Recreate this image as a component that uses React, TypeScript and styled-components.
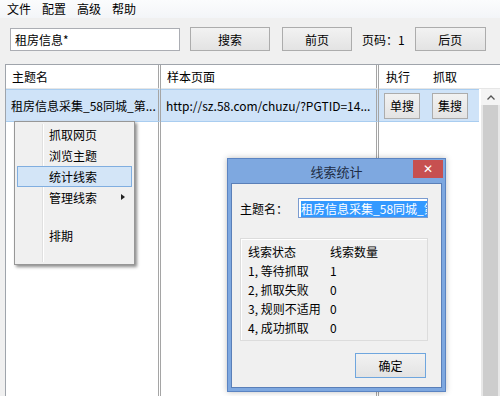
import React from "react";
import styled, { createGlobalStyle } from "styled-components";

const GlobalStyle = createGlobalStyle`
  html, body {
    margin: 0;
    padding: 0;
    background: #f0f0f0;
  }
  * {
    box-sizing: border-box;
  }
`;

const font = `"Noto Sans CJK SC", "Liberation Sans", sans-serif`;

const Window = styled.div`
  position: relative;
  width: 500px;
  height: 396px;
  overflow: hidden;
  background: #f0f0f0;
  font-family: ${font};
  font-size: 12px;
  color: #000;
  display: flex;
  flex-direction: column;
`;

const MenuBar = styled.div`
  height: 18px;
  display: flex;
  align-items: center;
  padding-left: 2px;
  background: linear-gradient(#fbfcfd, #f3f5f8);
`;

const MenuItem = styled.span`
  padding: 0 6px 0 5px;
  line-height: 18px;
`;

const Toolbar = styled.div`
  height: 46px;
  display: flex;
  align-items: center;
  padding: 0 10px 4px 10px;
`;

const SearchInput = styled.div`
  width: 170px;
  height: 23px;
  border: 1px solid #abadb3;
  background: #fff;
  padding-left: 4px;
  line-height: 21px;
`;

const Button = styled.div<{ $w: number; $h?: number; $default?: boolean }>`
  width: ${(p) => p.$w}px;
  height: ${(p) => p.$h ?? 24}px;
  border: 1px solid ${(p) => (p.$default ? "#6fa6de" : "#acacac")};
  background: linear-gradient(#f2f2f2, #e3e3e3);
  display: flex;
  align-items: center;
  justify-content: center;
  flex-shrink: 0;
`;

const Spacer = styled.div<{ $w: number }>`
  width: ${(p) => p.$w}px;
  flex-shrink: 0;
`;

const PageLabel = styled.span`
  margin: 0 10px;
`;

const Table = styled.div`
  flex: 1;
  margin-left: 5px;
  background: #fff;
  border-left: 1px solid #9fa4ab;
  border-top: 1px solid #9fa4ab;
  display: grid;
  grid-template-columns: 155px 218px 100px 1fr;
  grid-template-rows: 24px 33px 1fr;
`;

const HeadCell = styled.div<{ $sep?: boolean }>`
  display: flex;
  align-items: center;
  padding-left: ${(p) => (p.$sep ? 6 : 7)}px;
  border-right: ${(p) => (p.$sep ? "3px double #a5a5a5" : "none")};
  border-bottom: 1px solid #e6e6e6;
  gap: 23px;
`;

const RowCell = styled.div<{ $sep?: boolean }>`
  display: flex;
  align-items: center;
  padding-left: 5px;
  background: #cfe3f8;
  border-top: 1px solid #a9cdf0;
  border-bottom: 1px solid #a9cdf0;
  border-right: ${(p) => (p.$sep ? "3px double #a5a5a5" : "none")};
  white-space: nowrap;
  overflow: hidden;
  gap: 12px;
`;

const BodyCell = styled.div<{ $sep?: boolean }>`
  border-right: ${(p) => (p.$sep ? "3px double #a5a5a5" : "none")};
`;

const ScrollBar = styled.div`
  grid-column: 4;
  grid-row: 2 / span 2;
  margin-left: 2px;
  background: #e8e8e8;
  display: flex;
  flex-direction: column;
`;

const ScrollArrow = styled.div`
  height: 16px;
  display: flex;
  align-items: center;
  justify-content: center;
  background: #f4f4f4;
`;

const ScrollThumb = styled.div`
  flex: 1;
  background: #cdcdcd;
  margin: 0 2px;
`;

const ContextMenu = styled.div`
  position: absolute;
  left: 14px;
  top: 121px;
  width: 121px;
  height: 144px;
  background: #f0f0f0;
  border: 1px solid #979797;
  box-shadow: 2px 2px 3px rgba(0, 0, 0, 0.45);
  padding: 2px;
  display: flex;
  flex-direction: column;
  &::before {
    content: "";
    position: absolute;
    left: 27px;
    top: 2px;
    bottom: 2px;
    width: 1px;
    background: #e0e0e0;
    box-shadow: 1px 0 0 #fff;
  }
`;

const CtxItem = styled.div<{ $active?: boolean }>`
  position: relative;
  height: 21px;
  display: flex;
  align-items: center;
  padding-left: 31px;
  border: 1px solid ${(p) => (p.$active ? "#80aee0" : "transparent")};
  background: ${(p) => (p.$active ? "#d3e5f7" : "transparent")};
  z-index: 1;
`;

const CtxGap = styled.div`
  height: 17px;
`;

const SubArrow = styled.span`
  position: absolute;
  right: 6px;
  top: 6px;
  width: 0;
  height: 0;
  border-top: 3px solid transparent;
  border-bottom: 3px solid transparent;
  border-left: 4px solid #222;
`;

const Dialog = styled.div`
  position: absolute;
  left: 227px;
  top: 158px;
  width: 219px;
  height: 234px;
  background: #7ea8e0;
  border: 1px solid #5b84c2;
  padding: 0 3px 3px 3px;
  display: flex;
  flex-direction: column;
  box-shadow: 0 0 6px rgba(0, 0, 0, 0.25);
`;

const TitleBar = styled.div`
  position: relative;
  height: 24px;
  display: flex;
  align-items: center;
  justify-content: center;
  font-size: 13px;
  color: #1d2c44;
`;

const CloseBtn = styled.div`
  position: absolute;
  right: -1px;
  top: 1px;
  width: 30px;
  height: 18px;
  background: #c75050;
  color: #fff;
  display: flex;
  align-items: center;
  justify-content: center;
  font-family: "DejaVu Sans", sans-serif;
  font-size: 12px;
  font-weight: bold;
`;

const DialogBody = styled.div`
  flex: 1;
  background: #f0f0f0;
  border: 1px solid #5a7fb8;
  padding: 14px 0 0 8px;
  display: flex;
  flex-direction: column;
`;

const FieldRow = styled.div`
  display: flex;
  align-items: center;
  gap: 10px;
  white-space: nowrap;
`;

const TextField = styled.div`
  width: 130px;
  height: 20px;
  border: 1px solid #7a9bd0;
  background: #fff;
  padding: 1px 2px;
  overflow: hidden;
  white-space: nowrap;
  flex-shrink: 0;
`;

const Selected = styled.span`
  background: #3399ff;
  color: #fff;
  line-height: 16px;
  display: inline-block;
`;

const GroupBox = styled.div`
  margin-top: 20px;
  width: 188px;
  height: 103px;
  border: 1px solid #dcdcdc;
  box-shadow: inset 1px 1px 0 #fff;
  padding: 3px 0 0 7px;
  display: grid;
  grid-template-columns: 82px 1fr;
  grid-auto-rows: 19px;
  align-items: center;
`;

const DialogFooter = styled.div`
  display: flex;
  justify-content: flex-end;
  margin-top: 12px;
  padding-right: 15px;
`;

const rows = [
  ["线索状态", "线索数量"],
  ["1, 等待抓取", "1"],
  ["2, 抓取失败", "0"],
  ["3, 规则不适用", "0"],
  ["4, 成功抓取", "0"],
];

export default function App() {
  return (
    <Window>
      <GlobalStyle />
      <MenuBar>
        <MenuItem>文件</MenuItem>
        <MenuItem>配置</MenuItem>
        <MenuItem>高级</MenuItem>
        <MenuItem>帮助</MenuItem>
      </MenuBar>
      <Toolbar>
        <SearchInput>租房信息*</SearchInput>
        <Spacer $w={10} />
        <Button $w={80}>搜索</Button>
        <Spacer $w={12} />
        <Button $w={70}>前页</Button>
        <PageLabel>页码：1</PageLabel>
        <Button $w={71}>后页</Button>
      </Toolbar>
      <Table>
        <HeadCell $sep>主题名</HeadCell>
        <HeadCell $sep>样本页面</HeadCell>
        <HeadCell>
          <span>执行</span>
          <span>抓取</span>
        </HeadCell>
        <HeadCell />
        <RowCell $sep>租房信息采集_58同城_第...</RowCell>
        <RowCell $sep>http://sz.58.com/chuzu/?PGTID=14...</RowCell>
        <RowCell>
          <Button $w={36} $h={26}>单搜</Button>
          <Button $w={36} $h={26}>集搜</Button>
        </RowCell>
        <ScrollBar>
          <ScrollArrow>
            <svg width="8" height="5" viewBox="0 0 8 5">
              <path d="M0.5 4.5 L4 1 L7.5 4.5" fill="none" stroke="#555" strokeWidth="1.3" />
            </svg>
          </ScrollArrow>
          <ScrollThumb />
        </ScrollBar>
        <BodyCell $sep />
        <BodyCell $sep />
        <BodyCell />
      </Table>

      <ContextMenu>
        <CtxItem>抓取网页</CtxItem>
        <CtxItem>浏览主题</CtxItem>
        <CtxItem $active>统计线索</CtxItem>
        <CtxItem>
          管理线索
          <SubArrow />
        </CtxItem>
        <CtxGap />
        <CtxItem>排期</CtxItem>
      </ContextMenu>

      <Dialog>
        <TitleBar>
          线索统计
          <CloseBtn>✕</CloseBtn>
        </TitleBar>
        <DialogBody>
          <FieldRow>
            <span>主题名：</span>
            <TextField>
              <Selected>租房信息采集_58同城_第</Selected>
            </TextField>
          </FieldRow>
          <GroupBox>
            {rows.map(([a, b]) => (
              <React.Fragment key={a}>
                <span>{a}</span>
                <span>{b}</span>
              </React.Fragment>
            ))}
          </GroupBox>
          <DialogFooter>
            <Button $w={71} $h={25} $default>确定</Button>
          </DialogFooter>
        </DialogBody>
      </Dialog>
    </Window>
  );
}
